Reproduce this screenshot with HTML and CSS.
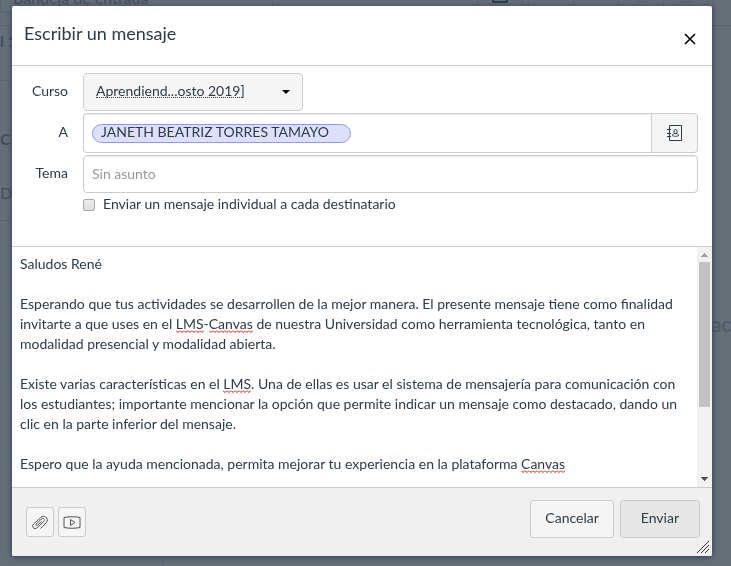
FILE: index.html
```html
<!DOCTYPE html>
<html lang="es">
<head>
<meta charset="utf-8">
<title>Escribir un mensaje</title>
<link rel="stylesheet" href="styles.css">
</head>
<body>
<div class="inbox" aria-hidden="true">
  <div class="toolbar">
    <div class="toolbar-filter">Bandeja de entrada</div>
    <div class="toolbar-actions">
      <span class="tool tool-primary"><svg width="16" height="16" viewBox="0 0 16 16"><path d="M1 1v14h14V7M5 11l9-9" fill="none" stroke="currentColor" stroke-width="2"/></svg></span>
      <span class="tool"></span>
      <span class="tool"></span>
      <span class="tool"><svg width="16" height="16" viewBox="0 0 16 16"><path d="M5 1h6l4 4v6l-4 4H5l-4-4V5z" fill="none" stroke="currentColor"/></svg></span>
      <span class="tool tool-last"><svg width="16" height="16" viewBox="0 0 16 16"><path d="M2 2h12v13H2zM5 12l3-3 3 3" fill="none" stroke="currentColor"/></svg></span>
      <span class="tool tool-search"></span>
    </div>
  </div>
  <div class="panes">
    <div class="threads">
      <div class="thread thread-date">l 1</div>
      <div class="thread thread-body"><b>C.</b><span>D</span></div>
    </div>
    <div class="empty">ac</div>
  </div>
</div>

<div class="overlay">
  <form class="dialog" role="dialog" aria-labelledby="dialog-title">
    <header class="dialog-header">
      <h1 id="dialog-title">Escribir un mensaje</h1>
      <button type="button" class="close" aria-label="Cerrar">
        <svg width="12" height="12" viewBox="0 0 12 12"><path d="M1 1l10 10M11 1L1 11" fill="none" stroke="currentColor" stroke-width="1.600"/></svg>
      </button>
    </header>

    <div class="fields">
      <label for="course">Curso</label>
      <div class="course">
        <select id="course"><option>Aprendiend...osto 2019]</option></select>
      </div>

      <label for="to">A</label>
      <div class="recipients">
        <div class="tokens">
          <span class="token">JANETH BEATRIZ TORRES TAMAYO</span>
          <input id="to" type="text" autocomplete="off">
        </div>
        <button type="button" class="address-book" aria-label="Libreta de direcciones">
          <svg width="16" height="18" viewBox="0 0 16 18" fill="none" stroke="currentColor"><path d="M2.500 1.500h12v15h-12z"/><path d="M0 5.500h4M0 9.500h4M0 12.500h4"/><path d="M5.500 11.500c0-1.200.8-1.700 2-2C6.500 8 6.800 5.500 8.500 5.500s2 2.500 1 4c1.200.3 2 .8 2 2 0 1-6 1-6 0zM7.500 9.500h2"/></svg>
        </button>
      </div>

      <label for="subject">Tema</label>
      <input id="subject" class="subject" type="text" placeholder="Sin asunto">

      <div class="individual">
        <input id="individual" type="checkbox">
        <label for="individual">Enviar un mensaje individual a cada destinatario</label>
      </div>
    </div>

    <div class="message">
      <div class="editor">
        <div class="squiggles" aria-hidden="true"></div>
        <textarea id="body" aria-label="Mensaje" spellcheck="false">Saludos René

Esperando que tus actividades se desarrollen de la mejor manera. El presente mensaje tiene como finalidad invitarte a que uses en el LMS-Canvas de nuestra Universidad como herramienta tecnológica, tanto en modalidad presencial y modalidad abierta.

Existe varias características en el LMS. Una de ellas es usar el sistema de mensajería para comunicación con los estudiantes; importante mencionar la opción que permite indicar un mensaje como destacado, dando un clic en la parte inferior del mensaje.

Espero que la ayuda mencionada, permita mejorar tu experiencia en la plataforma Canvas</textarea>
      </div>
      <div class="scrollbar" aria-hidden="true">
        <svg class="arrow-up" width="15" height="15" viewBox="0 0 15 15" shape-rendering="crispEdges"><path d="M4 10l3.500-4L11 10z" fill="currentColor"/></svg>
        <div class="track"><div class="thumb"></div></div>
        <svg class="arrow-down" width="15" height="15" viewBox="0 0 15 15" shape-rendering="crispEdges"><path d="M4 5l3.500 4L11 5z" fill="currentColor"/></svg>
      </div>
    </div>

    <footer class="dialog-footer">
      <div class="attachments">
        <button type="button" class="icon-button" aria-label="Adjuntar archivo">
          <svg width="18" height="18" viewBox="0 0 18 18" fill="none" stroke="currentColor"><path d="M9.500 15.500l5.800-5.800c3-3.200-1.200-9.200-5.800-5L2.700 11c-2.800 2.700.6 6.300 3.600 3.600l6.500-6.300c1.800-1.800-.6-3.900-2.500-2.200l-4.800 4.800c-1.200 1.200.2 2.300 1.300 1.200l3.700-3.700"/></svg>
        </button>
        <button type="button" class="icon-button" aria-label="Grabar multimedia">
          <svg width="18" height="18" viewBox="0 0 18 18" fill="none" stroke="currentColor"><path d="M1 4.500c5-1 11-1 16 0v10c-5 1-11 1-16 0z"/><path d="M7.500 6.500v6l4.500-3z"/></svg>
        </button>
      </div>
      <div class="actions">
        <button type="button" class="button">Cancelar</button>
        <button type="submit" class="button button-send">Enviar</button>
      </div>
    </footer>
    <svg class="grip" width="12" height="12" viewBox="0 0 12 12" shape-rendering="crispEdges" aria-hidden="true"><path d="M0 12L12 0M4 12l8-8M8 12l4-4" stroke="currentColor" fill="none"/></svg>
  </form>
</div>
<script src="script.js"></script>
</body>
</html>
```
FILE: styles.css
```css
* {
  box-sizing: border-box;
}

body {
  margin: 0;
  height: 100vh;
  overflow: hidden;
  background: #666e78;
  color: #2d3b45;
  font: 14px/20px Lato, "Liberation Sans", sans-serif;
}

input,
select,
textarea,
button {
  margin: 0;
  color: inherit;
  font: inherit;
}

svg {
  display: block;
}

/* Inbox behind the dialog */
.inbox {
  display: flex;
  flex-direction: column;
  height: 100%;
  color: #434e59;
  font-size: 16px;
}

.toolbar {
  display: flex;
  justify-content: space-between;
  height: 26px;
  padding-bottom: 12px;
  border-bottom: 1px solid #5b646f;
}

.toolbar-filter {
  display: flex;
  align-items: flex-end;
  width: 273px;
  padding: 0 12px 4px;
  border: 1px solid #5b646f;
  border-top: 0;
  border-radius: 0 0 4px 4px;
}

.toolbar-actions {
  display: flex;
  color: #57616c;
}

.tool {
  display: flex;
  align-items: flex-end;
  justify-content: center;
  width: 45px;
  padding-bottom: 10px;
  border-left: 1px solid #5b646f;
}

.tool-primary {
  width: 46px;
  margin-right: 5px;
  border-right: 1px solid #5b646f;
  color: #2e3d50;
}

.tool-last {
  width: 46px;
  margin-right: 4px;
  border-right: 1px solid #5b646f;
}

.tool-search {
  width: 18px;
}

.panes {
  display: flex;
  flex: 1;
}

.threads {
  width: 163px;
  border-right: 1px solid #5b646f;
}

.thread {
  border-bottom: 1px solid #5b646f;
}

.thread-date {
  height: 55px;
  padding-top: 5px;
  font-weight: 700;
}

.thread-body {
  display: flex;
  flex-direction: column;
  gap: 34px;
  height: 140px;
  padding-top: 48px;
}

.empty {
  display: flex;
  flex: 1;
  align-items: center;
  justify-content: flex-end;
  padding-top: 56px;
  color: #525c67;
  font-size: 20px;
  font-weight: 700;
}

/* Dialog */
.overlay {
  position: fixed;
  inset: 0;
  padding: 6px 19px 10px 12px;
}

.dialog {
  position: relative;
  display: flex;
  flex-direction: column;
  height: 100%;
  overflow: hidden;
  background: #fff;
  border-radius: 2px;
  box-shadow: 0 1px 6px #2d3b55;
}

.dialog-header {
  display: flex;
  align-items: center;
  justify-content: space-between;
  padding: 11px 12px 16px;
  border-bottom: 1px solid #c7cdd1;
}

.dialog-header h1 {
  margin: 0;
  font-size: 18px;
  font-weight: 400;
  line-height: 24px;
}

.close {
  padding: 4px;
  margin-top: 12px;
  border: 0;
  background: none;
  color: #000;
}

.fields {
  display: grid;
  grid-template-columns: 56px 1fr;
  gap: 2px 15px;
  align-items: center;
  padding: 7px 14px 31px 0;
}

.fields label {
  padding-bottom: 2px;
}

.fields > label {
  text-align: right;
}

.course {
  position: relative;
  width: 220px;
}

.course select {
  display: block;
  width: 100%;
  height: 38px;
  padding: 0 12px 2px;
  appearance: none;
  border: 1px solid #c7cdd1;
  border-radius: 4px;
  background: #f5f5f5;
}

.course::before {
  content: "";
  position: absolute;
  top: 24px;
  left: 13px;
  width: 144px;
  border-bottom: 1px dotted #2d3b45;
}

.course::after {
  content: "";
  position: absolute;
  top: 17px;
  right: 13px;
  border: 4px solid transparent;
  border-top-color: #000;
  border-bottom: 0;
}

.recipients {
  display: flex;
}

.tokens {
  display: flex;
  flex: 1;
  align-items: center;
  gap: 8px;
  height: 40px;
  padding: 0 8px;
  border: 1px solid #c7cdd1;
  border-right: 0;
  border-radius: 4px 0 0 4px;
  box-shadow: inset 0 1px 1px #eee;
}

.tokens input {
  flex: 1;
  min-width: 0;
  border: 0;
  outline: 0;
  background: none;
}

.token {
  padding: 0 21px 3px 8px;
  line-height: 14px;
  border: 1px solid #8c9be6;
  border-radius: 10px;
  background: #dee0fa;
}

.address-book {
  display: flex;
  align-items: center;
  justify-content: center;
  width: 47px;
  padding: 0;
  border: 1px solid #c7cdd1;
  border-radius: 0 4px 4px 0;
  background: #f5f5f5;
}

.subject {
  width: 100%;
  height: 38px;
  padding: 0 8px 2px;
  border: 1px solid #c7cdd1;
  border-radius: 4px;
  box-shadow: inset 0 1px 1px #eee;
}

.subject::placeholder {
  color: #999;
}

.individual {
  display: flex;
  grid-column: 2;
  align-items: center;
  gap: 8px;
  line-height: 18px;
}

.individual input {
  width: 12px;
  height: 12px;
  appearance: none;
  border: 1px solid #a9a9a9;
  border-radius: 2px;
  background: linear-gradient(#eee, #dcdcdc);
}

.message {
  display: flex;
  flex: 1;
  min-height: 0;
  border-top: 1px solid #c7cdd1;
}

.editor {
  position: relative;
  flex: 1;
  overflow: hidden;
}

.editor textarea,
.mirror {
  display: block;
  width: 100%;
  padding: 7px 8px 0;
  overflow-wrap: break-word;
  white-space: pre-wrap;
}

.editor textarea {
  position: relative;
  height: 100%;
  border: 0;
  outline: 0;
  resize: none;
  background: none;
  scrollbar-width: none;
}

.squiggles {
  position: absolute;
  inset: 0;
}

.squiggle {
  position: absolute;
  height: 3px;
  background: url("data:image/svg+xml,%3Csvg xmlns='http://www.w3.org/2000/svg' width='4' height='3'%3E%3Cpath d='M0 .5L2 2.500 4 .5' fill='none' stroke='red'/%3E%3C/svg%3E") repeat-x;
}

.scrollbar {
  display: flex;
  flex-direction: column;
  width: 15px;
  background: #f1f1f1;
}

.arrow-up {
  color: #a3a3a3;
}

.arrow-down {
  color: #505050;
}

.track {
  flex: 1;
  padding: 0 2px;
}

.thumb {
  height: 69%;
  background: #c1c1c1;
}

.dialog-footer {
  display: flex;
  align-items: center;
  justify-content: space-between;
  padding: 12px 12px 18px 14px;
  border-top: 1px solid #c7cdd1;
  background: #f0f0f0;
}

.attachments {
  display: flex;
  gap: 4px;
  padding-top: 6px;
}

.icon-button {
  display: flex;
  align-items: center;
  justify-content: center;
  width: 28px;
  height: 30px;
  padding: 0;
  border: 1px solid #c7cdd1;
  border-radius: 3px;
  background: #f5f5f5;
  color: #555;
}

.actions {
  display: flex;
  gap: 6px;
}

.button {
  padding: 7px 14px 9px;
  border: 1px solid #c7cdd1;
  border-radius: 3px;
  background: #f5f5f5;
}

.button-send {
  padding: 7px 20px 9px;
  background: #e6e6e6;
}

.grip {
  position: absolute;
  right: 3px;
  bottom: 3px;
  color: #333;
}
```
FILE: script.js
```js
const body = document.getElementById("body");
const layer = document.querySelector(".squiggles");
const unknown = /\b(?:LMS|Canvas)\b/g;

function drawSquiggles() {
  // A throwaway copy of the text gives the place of each word.
  const mirror = document.createElement("div");
  mirror.className = "mirror";
  mirror.textContent = body.value;
  layer.replaceChildren(mirror);

  const origin = layer.getBoundingClientRect();
  const text = mirror.firstChild;
  const marks = [];
  for (const match of body.value.matchAll(unknown)) {
    const range = document.createRange();
    range.setStart(text, match.index);
    range.setEnd(text, match.index + match[0].length);
    const box = range.getBoundingClientRect();
    const mark = document.createElement("span");
    mark.className = "squiggle";
    mark.style.left = Math.round(box.left - origin.left) + "px";
    mark.style.top = Math.round(box.bottom - origin.top - body.scrollTop - 2) + "px";
    mark.style.width = Math.round(box.width) + "px";
    marks.push(mark);
  }
  layer.replaceChildren(...marks);
}

body.addEventListener("input", drawSquiggles);
body.addEventListener("scroll", drawSquiggles);
window.addEventListener("resize", drawSquiggles);
drawSquiggles();
```
